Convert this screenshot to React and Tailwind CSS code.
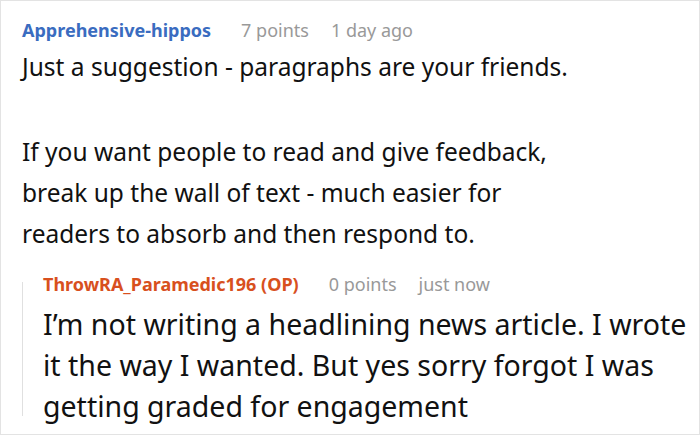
export default function App() {
  return (
    <div
      className="w-[700px] h-[435px] overflow-hidden border border-[#e3e3e3] bg-white text-[#111]"
      style={{ fontFamily: '"Noto Sans", "Open Sans", sans-serif' }}
    >
      <div className="pl-[21px] pt-[18px]">
        <div className="flex items-baseline text-[18px] leading-[22px]">
          <span className="font-bold text-[#3a6cc0]">Apprehensive-hippos</span>
          <span className="ml-[30px] text-[#999]">7 points</span>
          <span className="ml-[22px] text-[#999]">1 day ago</span>
        </div>
        <div className="mt-[5px] text-[24.5px] leading-[41px]">
          <p>Just a suggestion - paragraphs are your friends.</p>
          <p className="mt-[44px]">
            If you want people to read and give feedback,
            <br />
            break up the wall of text - much easier for
            <br />
            readers to absorb and then respond to.
          </p>
        </div>
        <div className="mt-[19px] flex">
          <div className="mt-[9px] h-[134px] w-px bg-[#e0e0e0]" />
          <div className="pl-[20px]">
            <div className="flex items-baseline text-[18px] leading-[22px]">
              <span className="font-bold text-[#d8501e]">ThrowRA_Paramedic196 (OP)</span>
              <span className="ml-[30px] text-[#999]">0 points</span>
              <span className="ml-[22px] text-[#999]">just now</span>
            </div>
            <p className="mt-[9px] text-[28.5px] leading-[41px]">
              I’m not writing a headlining news article. I wrote
              <br />
              it the way I wanted. But yes sorry forgot I was
              <br />
              getting graded for engagement
            </p>
          </div>
        </div>
      </div>
    </div>
  );
}
